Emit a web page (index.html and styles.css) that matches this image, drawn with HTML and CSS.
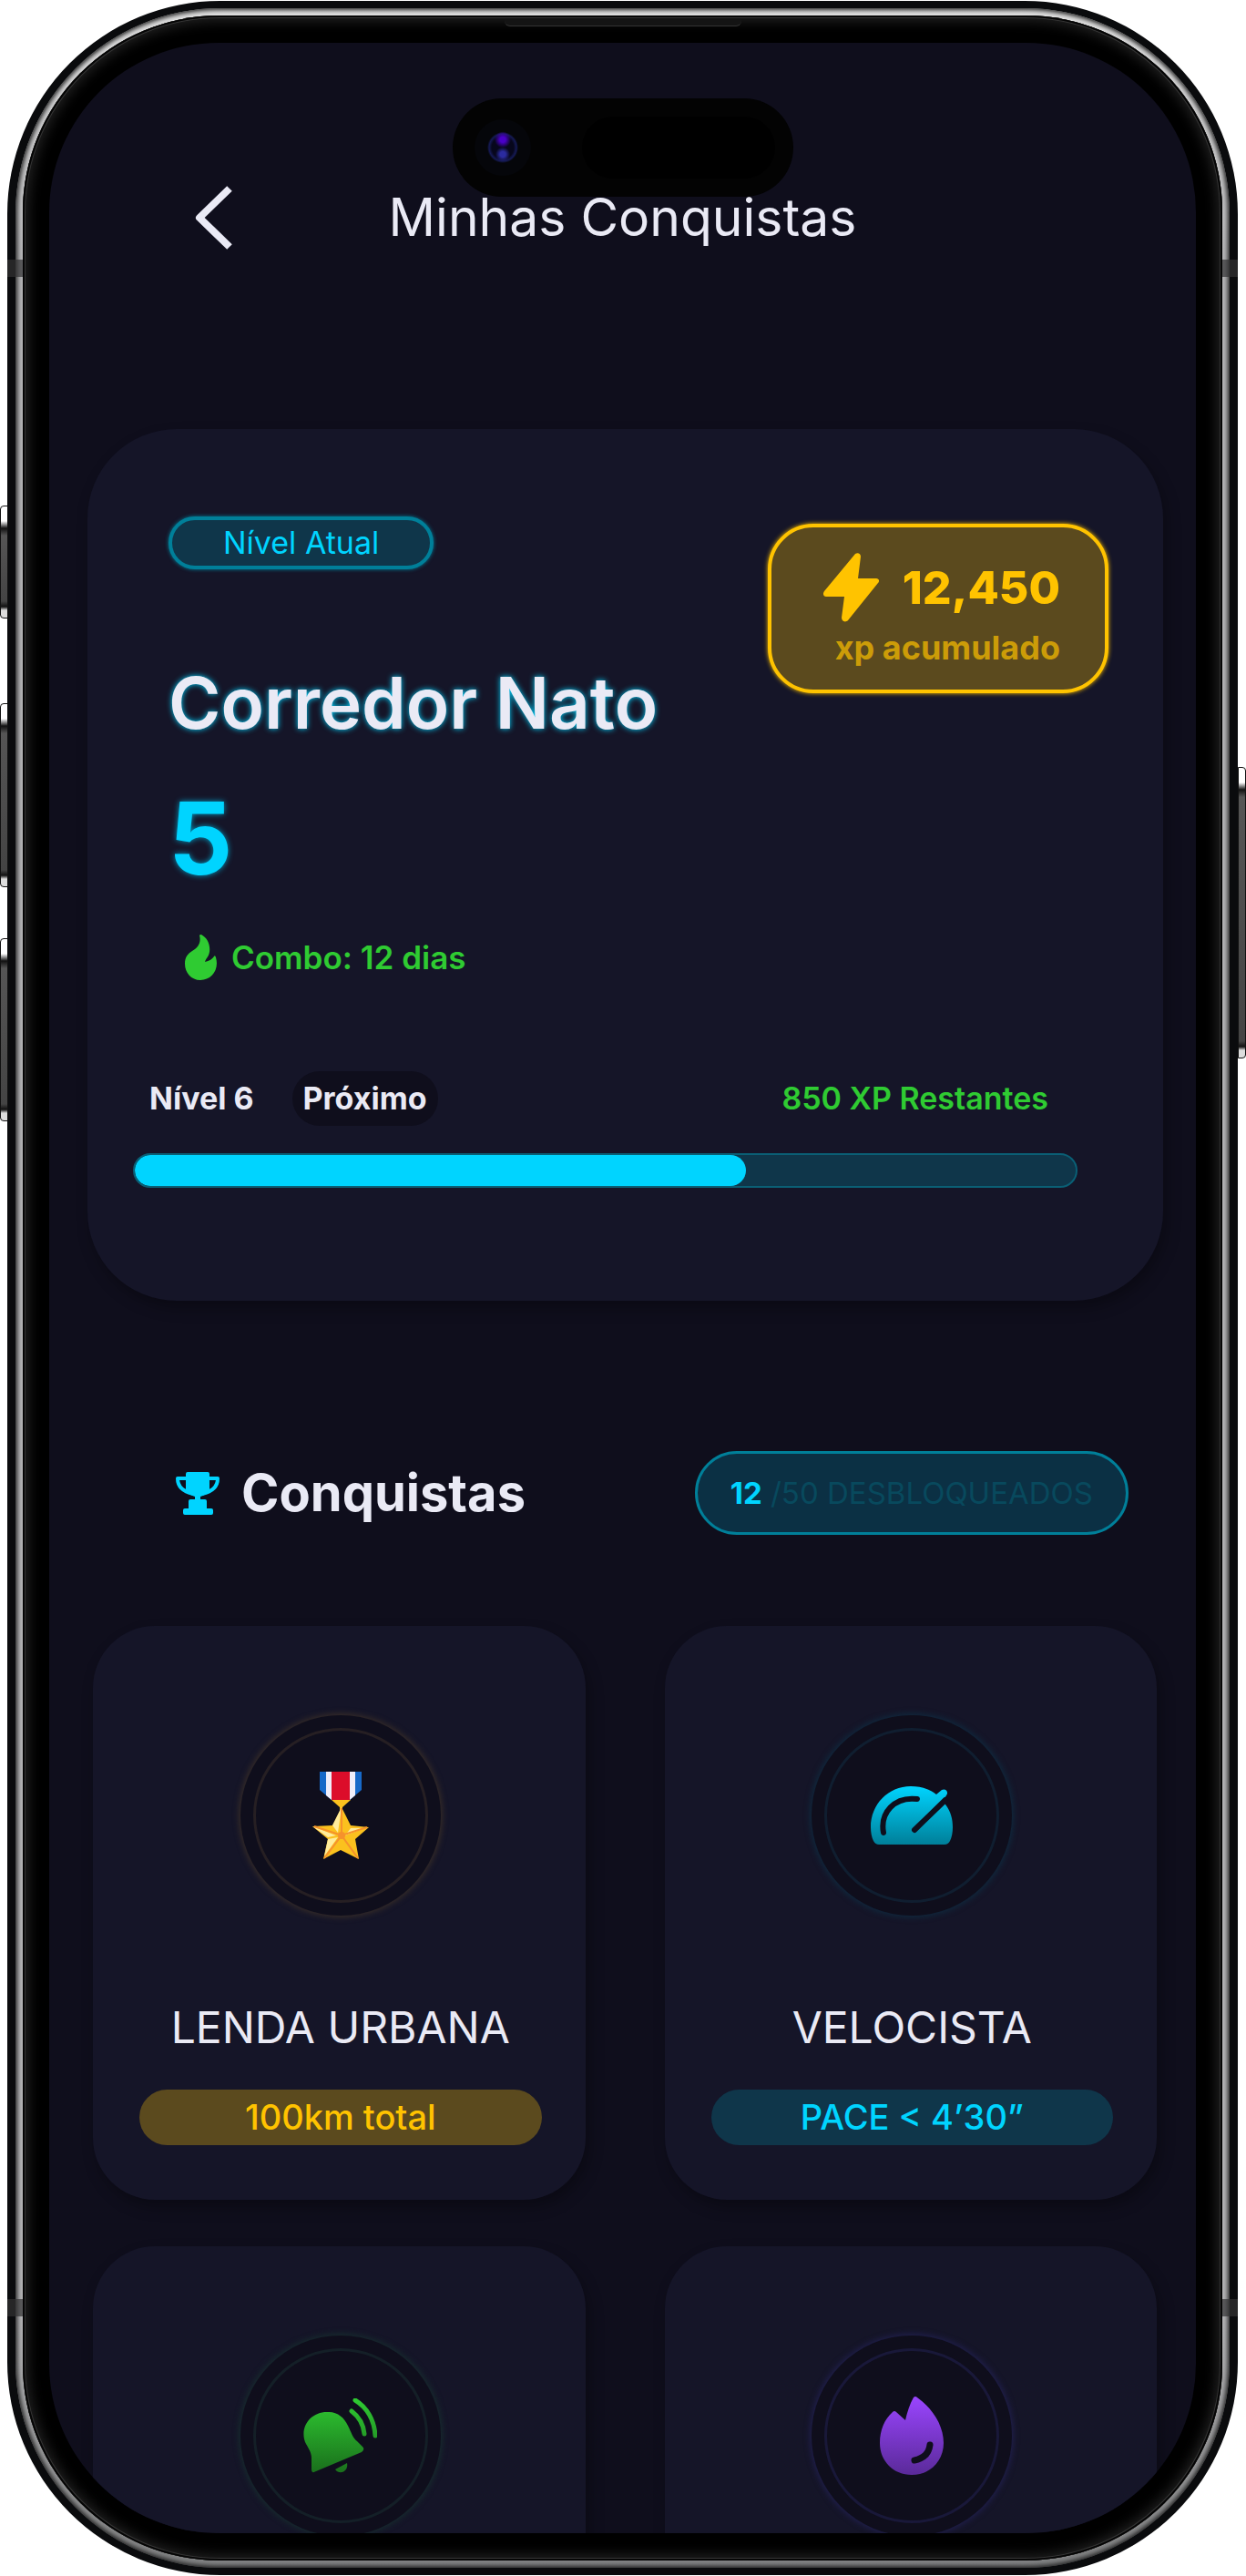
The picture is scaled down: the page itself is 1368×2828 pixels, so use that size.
FILE: index.html
```
<!DOCTYPE html>
<html lang="pt-BR">
<head>
  <meta charset="UTF-8" />
  <meta name="viewport" content="width=device-width, initial-scale=1.0"/>
  <title>Minhas Conquistas</title>
  <link rel="stylesheet" href="styles.css">
</head>
<body>

  <div class="phone">
    <span class="side-btn action"></span>
    <span class="side-btn vol-up"></span>
    <span class="side-btn vol-down"></span>
    <span class="side-btn power"></span>
    <span class="antenna top"></span>
    <span class="antenna bottom"></span>

    <div class="metal">
      <div class="bezel">
        <span class="speaker"></span>

        <main class="screen">
          <div class="island">
            <span class="camera"></span>
            <span class="sensor"></span>
          </div>

          <header class="header">
            <button class="back" type="button" aria-label="Voltar">
              <svg width="42" height="70" viewBox="0 0 42 70" fill="none" stroke="#eaeaf5" stroke-width="8">
                <path d="M38 3 L5 35 L38 67" stroke-linejoin="round"/>
              </svg>
            </button>
            <h1>Minhas Conquistas</h1>
          </header>

          <section class="level-card">
            <div class="level-top">
              <div class="level-info">
                <span class="current">Nível Atual</span>
                <h2>Corredor Nato</h2>
                <p class="number">5</p>
                <p class="combo">
                  <svg width="35" height="50" viewBox="0 0 35 50" fill="#2fcb32">
                    <path d="M16 1 Q16 0 18 0 C25 4 28 11 27 19 C26 25 23 26 22 30 C27 29 30 27 32 24 Q33 22 34 25 C38 39 29 50 17 50 C7 50 0 42 0 32 C0 25 3 21 8 18 C15 14 18 8 16 1Z"/>
                  </svg>
                  Combo: 12 dias
                </p>
              </div>
              <div class="xp">
                <p class="xp-value">
                  <svg width="61" height="76" viewBox="0 0 61 76" fill="#ffc300">
                    <path d="M35 1 C38 -1 41 1 41 4 L38 28 H58 C61 28 62 31 60 33 L27 74 C24 77 20 75 20 71 L23 48 H3 C0 48 -1 45 1 42Z"/>
                  </svg>
                  12,450
                </p>
                <p class="xp-label">xp acumulado</p>
              </div>
            </div>

            <div class="level-row">
              <span>Nível 6</span>
              <span class="next">Próximo</span>
              <span class="remaining">850 XP Restantes</span>
            </div>
            <progress class="bar" max="100" value="65" aria-label="Progresso para o nível 6"></progress>
          </section>

          <div class="section-head">
            <h2>
              <svg width="48" height="48" viewBox="0 0 48 48" fill="#00d4ff">
                <path d="M11 3 Q11 1 13 1 H35 Q37 1 37 3 V22 Q31 27 27 28 V31 H32 Q34 31 34 33 V41 H39 Q41 41 41 43 V46 Q41 48 39 48 H10 Q8 48 8 46 V43 Q8 41 10 41 H14 V33 Q14 31 16 31 H21 V28 Q17 27 11 22Z"/>
                <path d="M12 8 H2 C2 19 10 23 19 25 M36 8 H46 C46 19 38 23 29 25" fill="none" stroke="#00d4ff" stroke-width="4" stroke-linejoin="round"/>
              </svg>
              Conquistas
            </h2>
            <p class="counter"><strong>12</strong> /50 DESBLOQUEADOS</p>
          </div>

          <section class="badges">
            <article class="badge gold">
              <div class="ring">
                <svg width="62" height="96" viewBox="0 0 62 96">
                  <path d="M8 0 H54 V20 L41 31 H21 L8 20Z" fill="#1769c8"/>
                  <path d="M15 0 H47 V26 L41 31 H21 L15 26Z" fill="#f0eefa"/>
                  <path d="M21 0 H41 V31 H21Z" fill="#dc0d2a"/>
                  <path d="M21 31 H42 L33 39 V44 H30 V39Z" fill="#fbc11e"/>
                  <path d="M32 39 L42 59 L62 61 L47 74 L51 96 L31 86 L12 96 L17 74 L0 60 L22 59Z" fill="#fbc11e"/>
                  <path d="M32 39 L22 59 L28 67Z M17 74 L28 72 L13 93Z M0 60 L17 72 L26 70Z M58 62 L36 70 L42 62Z" fill="#ffec9c"/>
                  <path d="M32 40 V70 M2 60 L32 70 L60 61 M13 95 L32 70 L50 95" stroke="#f6922c" stroke-width="2" fill="none"/>
                  <circle cx="32" cy="70" r="4" fill="#f6922c"/>
                </svg>
              </div>
              <h3>LENDA URBANA</h3>
              <p class="goal">100km total</p>
            </article>

            <article class="badge cyan">
              <div class="ring">
                <svg width="90" height="64" viewBox="0 0 90 64">
                  <defs>
                    <linearGradient id="cyanFade" x1="0" y1="0" x2="0" y2="1">
                      <stop offset="0" stop-color="#00d4ff"/>
                      <stop offset="1" stop-color="#007f99"/>
                    </linearGradient>
                  </defs>
                  <path d="M44 0 C55 0 65 3 72 9 L78 4 C82 2 86 6 83 10 L79 17 L82 20 C88 28 90 36 90 45 Q90 54 87 60 Q85 64 81 64 H9 Q5 64 3 60 Q0 54 0 45 C0 20 19 0 44 0Z" fill="url(#cyanFade)"/>
                  <path d="M14 51 C10 29 26 11 51 14 M48 48 L82 15" fill="none" stroke="#0f0e1c" stroke-width="6" stroke-linecap="round"/>
                </svg>
              </div>
              <h3>VELOCISTA</h3>
              <p class="goal">PACE &lt; 4’30”</p>
            </article>

            <article class="badge green">
              <div class="ring">
                <svg width="81" height="82" viewBox="0 0 81 82">
                  <defs>
                    <linearGradient id="greenFade" gradientUnits="userSpaceOnUse" x1="0" y1="0" x2="0" y2="82">
                      <stop offset="0" stop-color="#2fcb32"/>
                      <stop offset="1" stop-color="#1a6f1c"/>
                    </linearGradient>
                  </defs>
                  <path d="M26 15 C37 14 45 21 49 30 C53 38 54 43 59 47 L65 53 Q68 56 64 59 L14 80 Q9 83 9 78 V65 C9 59 5 54 2 48 C-4 31 8 15 26 15Z M35 78 L48 71 C50 80 40 85 35 78Z" fill="url(#greenFade)"/>
                  <path d="M53 14 C61 20 66 28 67 39 M57 2 C70 10 78 24 79 41" fill="none" stroke="url(#greenFade)" stroke-width="5" stroke-linecap="round"/>
                </svg>
              </div>
            </article>

            <article class="badge purple">
              <div class="ring">
                <svg width="70" height="86" viewBox="0 0 70 86">
                  <defs>
                    <linearGradient id="purpleFade" x1="0" y1="0" x2="0" y2="1">
                      <stop offset="0" stop-color="#9a45ff"/>
                      <stop offset="1" stop-color="#5a2a99"/>
                    </linearGradient>
                  </defs>
                  <path d="M37 1 Q39 -1 41 1 C58 13 70 32 70 51 C70 71 55 86 35 86 C15 86 0 71 0 51 C0 37 5 25 14 17 Q16 15 18 17 L28 26 C30 17 33 8 37 1Z" fill="url(#purpleFade)"/>
                  <path d="M55 53 C54 62 48 68 38 70" fill="none" stroke="#0f0e1c" stroke-width="7" stroke-linecap="round"/>
                </svg>
              </div>
            </article>
          </section>
        </main>
      </div>
    </div>
  </div>

</body>
</html>
```
FILE: styles.css
```
* {
  box-sizing: border-box;
  padding: 0;
  margin: 0;
}

body {
  font-family: 'Inter', sans-serif;
  background: #fff;
  color: #eaeaf5;
}

svg {
  display: block;
  flex-shrink: 0;
}

/* phone frame */
.phone {
  position: relative;
  height: 100vh;
  padding: 1px 9px 1px 8px;
}

.metal {
  height: 100%;
  padding: 8px;
  border: 9px solid #0a0b0d;
  border-width: 8px 9px;
  border-radius: 234px;
  background: linear-gradient(#e2e2e2, #b4b4b6 10%, #b4b4b6 90%, #808182);
  box-shadow: inset 0 0 5px 2px #222;
}

.bezel {
  position: relative;
  height: 100%;
  padding: 30px 29px;
  border-radius: 216px;
  background: #000;
  box-shadow: inset 0 0 0 2px #050505, inset 0 0 0 3px #333, inset 0 0 14px 6px #222;
}

.screen {
  position: relative;
  height: 100%;
  overflow: hidden;
  border-radius: 186px;
  background: #0f0e1c;
}

.side-btn {
  position: absolute;
  left: 0;
  width: 9px;
  border-radius: 4px 0 0 4px;
  border: 1px solid #111;
  background: linear-gradient(#fff 16px, #111 24px, #555 32px, #444 calc(100% - 18px), #111 calc(100% - 12px), #ddd calc(100% - 8px));
}

.action {
  top: 555px;
  height: 124px;
}

.vol-up {
  top: 772px;
  height: 202px;
}

.vol-down {
  top: 1030px;
  height: 201px;
}

.power {
  top: 842px;
  left: auto;
  right: 0;
  height: 320px;
  border-radius: 0 4px 4px 0;
}

.antenna {
  position: absolute;
  left: 8px;
  right: 9px;
  height: 19px;
  border: solid rgba(50, 50, 51, 0.7);
  border-width: 0 17px;
}

.antenna.top {
  top: 285px;
}

.antenna.bottom {
  bottom: 285px;
}

.speaker {
  position: absolute;
  top: 3px;
  left: 50%;
  width: 260px;
  height: 9px;
  transform: translateX(-50%);
  border-bottom: 1px solid #333;
  border-radius: 0 0 6px 6px;
  background: #141414;
}

.island {
  position: absolute;
  top: 61px;
  left: 50%;
  width: 374px;
  height: 108px;
  transform: translateX(-50%);
  display: flex;
  align-items: center;
  justify-content: space-between;
  padding: 0 20px 0 24px;
  border-radius: 54px;
  background: #030303;
}

.camera {
  width: 62px;
  height: 62px;
  border-radius: 50%;
  background:
    radial-gradient(circle at 50% 36%, #4a00c8 3px, transparent 9px),
    radial-gradient(circle at 50% 62%, #2b2ba0 3px, transparent 8px),
    radial-gradient(circle, #07071c 12px, #151a55 15px, #05060a 17px);
}

.sensor {
  width: 212px;
  height: 68px;
  border-radius: 34px;
  background: #000;
}

/* header */
.header {
  display: grid;
  grid-template-columns: 1fr auto 1fr;
  align-items: center;
  padding: 157px 40px 0 40px;
}

.back {
  justify-self: start;
  margin-left: 120px;
  border: none;
  background: none;
  cursor: pointer;
}

h1 {
  font-size: 57px;
  font-weight: 400;
  line-height: 70px;
}

/* level card */
.level-card {
  margin: 197px 36px 0 42px;
  padding: 96px 60px 124px 50px;
  border-radius: 98px;
  background: #151528;
  box-shadow: 4px 8px 16px rgba(0, 0, 0, 0.3);
}

.level-top {
  display: flex;
  justify-content: space-between;
  align-items: flex-start;
  padding-left: 39px;
}

.current {
  display: inline-block;
  padding: 0 56px;
  border: 4px solid #007f99;
  border-radius: 29px;
  background: #0f364a;
  box-shadow: 0 0 4px #007f99;
  color: #00d4ff;
  font-size: 34px;
  line-height: 50px;
}

.level-info h2 {
  margin-top: 104px;
  font-size: 78px;
  font-weight: 600;
  line-height: 86px;
  text-shadow: 0 0 6px #00d4ff;
}

.number {
  margin-top: 45px;
  color: #00d4ff;
  font-size: 110px;
  font-weight: 700;
  line-height: 120px;
  text-shadow: 0 0 6px #00a0c8;
}

.combo {
  display: flex;
  align-items: center;
  gap: 16px;
  margin-top: 46px;
  padding-left: 18px;
  color: #2fcb32;
  font-size: 35px;
  font-weight: 600;
  line-height: 50px;
}

.xp {
  margin-top: 8px;
  padding: 28px 49px 18px 57px;
  border: 4px solid #ffc300;
  border-radius: 50px;
  background: #5b4a1e;
  box-shadow: 0 0 5px #ffc300;
  color: #ffc300;
  text-align: right;
}

.xp-value {
  display: flex;
  align-items: center;
  justify-content: space-between;
  gap: 26px;
  font-size: 50px;
  font-weight: 800;
  line-height: 76px;
}

.xp-label {
  color: #cc9c08;
  font-size: 36px;
  font-weight: 700;
  line-height: 56px;
}

.level-row {
  display: flex;
  align-items: center;
  gap: 42px;
  margin-top: 100px;
  padding: 0 66px 0 18px;
  font-size: 34px;
  font-weight: 700;
  line-height: 60px;
}

.next {
  padding: 0 12px;
  border-radius: 30px;
  background: #0f0e1c;
}

.remaining {
  margin-left: auto;
  color: #2fcb32;
  font-weight: 600;
}

.bar {
  display: block;
  width: calc(100% - 34px);
  height: 38px;
  margin-top: 30px;
  appearance: none;
  border: none;
}

.bar::-webkit-progress-bar {
  overflow: hidden;
  border: 2px solid #0a5f75;
  border-radius: 19px;
  background: #0f364a;
}

.bar::-webkit-progress-value {
  border-radius: 19px;
  background: #00d4ff;
}

/* achievements */
.section-head {
  display: flex;
  align-items: center;
  justify-content: space-between;
  margin-top: 165px;
  padding: 0 74px 0 139px;
}

.section-head h2 {
  display: flex;
  align-items: center;
  gap: 24px;
  font-size: 56px;
  font-weight: 700;
  line-height: 92px;
}

.counter {
  padding: 0 36px;
  border: 3px solid #007f99;
  border-radius: 46px;
  background: #0b3044;
  color: #08495d;
  font-size: 33px;
  line-height: 86px;
}

.counter strong {
  color: #00d4ff;
}

.badges {
  display: grid;
  grid-template-columns: 1fr 1fr;
  gap: 51px 87px;
  margin-top: 100px;
  padding: 0 43px 0 48px;
}

.badge {
  display: flex;
  flex-direction: column;
  align-items: center;
  min-height: 630px;
  padding: 98px 48px 60px 51px;
  border-radius: 68px;
  background: #151528;
  box-shadow: 4px 8px 16px rgba(0, 0, 0, 0.3);
}

.ring {
  position: relative;
  display: grid;
  place-items: center;
  width: 220px;
  height: 220px;
  border-radius: 50%;
  background: #0f0e1c;
  box-shadow: 0 0 6px 2px var(--glow);
}

.ring::before {
  content: "";
  position: absolute;
  inset: 14px;
  border: 3px solid var(--glow);
  border-radius: 50%;
  opacity: 0.6;
}

.badge h3 {
  margin-top: 91px;
  font-size: 48px;
  font-weight: 400;
  line-height: 64px;
  white-space: nowrap;
}

.goal {
  align-self: stretch;
  margin-top: 36px;
  border-radius: 31px;
  font-size: 38px;
  font-weight: 500;
  line-height: 61px;
  text-align: center;
}

.gold {
  --glow: #362c28;
}

.cyan {
  --glow: #10293e;
}

.green {
  --glow: #172b2e;
}

.purple {
  --glow: #201f4c;
}

.gold .goal {
  background: #5b4a1e;
  color: #ffc300;
}

.cyan .goal {
  background: #0f364a;
  color: #00d4ff;
}
```
